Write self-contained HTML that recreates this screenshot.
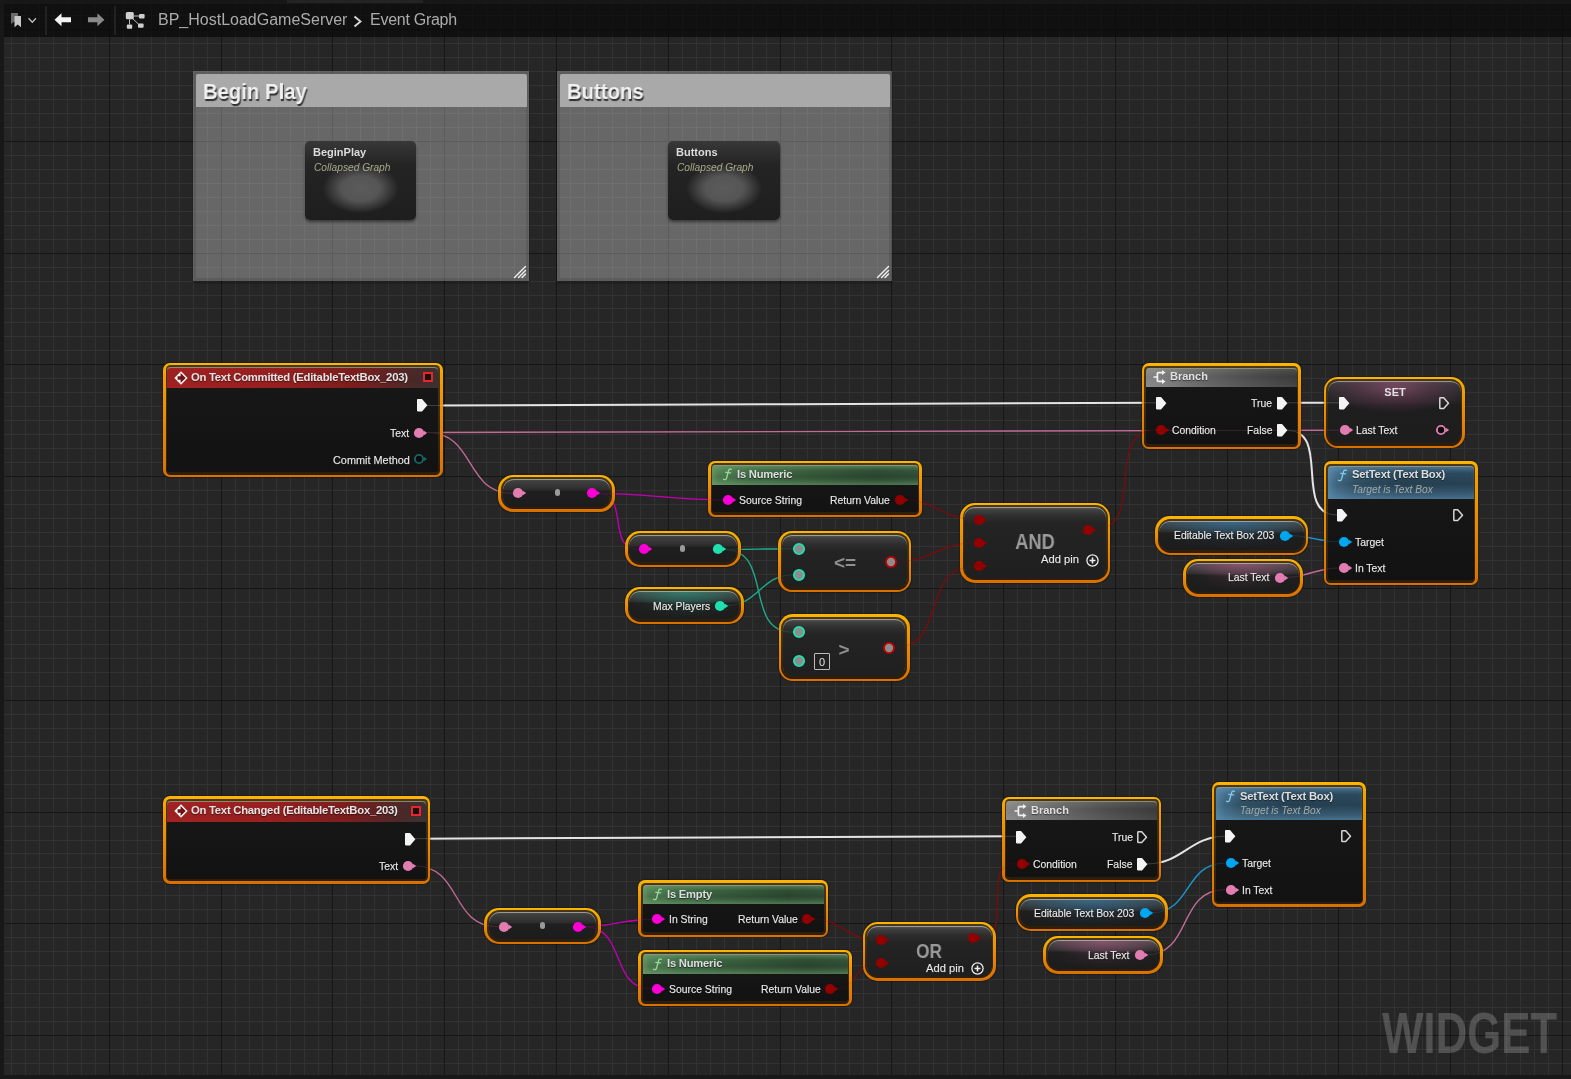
<!DOCTYPE html><html><head><meta charset="utf-8"><style>
*{box-sizing:border-box;margin:0;padding:0}
html,body{width:1571px;height:1079px;overflow:hidden;background:#262626;font-family:"Liberation Sans", sans-serif;}
.t{will-change:transform}
.abs{position:absolute}
.t{position:absolute;white-space:nowrap;line-height:1;color:#e6e6e6}
.node{position:absolute;border:3px solid transparent;border-radius:7px;
  background:linear-gradient(#161616,#111111) padding-box, linear-gradient(#f6b400,#f28a00 70%,#ee7500) border-box;}
.comment{position:absolute;background:rgba(255,255,255,0.30);box-shadow:0 1px 2px rgba(0,0,0,.5)}
</style></head><body><svg width="1571" height="1079" style="position:absolute;left:0;top:0" shape-rendering="crispEdges"><path d="M11 0h1v1079h-1zM25 0h1v1079h-1zM39 0h1v1079h-1zM53 0h1v1079h-1zM67 0h1v1079h-1zM81 0h1v1079h-1zM95 0h1v1079h-1zM123 0h1v1079h-1zM137 0h1v1079h-1zM151 0h1v1079h-1zM165 0h1v1079h-1zM179 0h1v1079h-1zM193 0h1v1079h-1zM207 0h1v1079h-1zM235 0h1v1079h-1zM249 0h1v1079h-1zM262 0h1v1079h-1zM276 0h1v1079h-1zM290 0h1v1079h-1zM304 0h1v1079h-1zM318 0h1v1079h-1zM346 0h1v1079h-1zM360 0h1v1079h-1zM374 0h1v1079h-1zM388 0h1v1079h-1zM402 0h1v1079h-1zM416 0h1v1079h-1zM430 0h1v1079h-1zM458 0h1v1079h-1zM472 0h1v1079h-1zM486 0h1v1079h-1zM500 0h1v1079h-1zM514 0h1v1079h-1zM528 0h1v1079h-1zM542 0h1v1079h-1zM570 0h1v1079h-1zM584 0h1v1079h-1zM598 0h1v1079h-1zM612 0h1v1079h-1zM626 0h1v1079h-1zM640 0h1v1079h-1zM654 0h1v1079h-1zM682 0h1v1079h-1zM696 0h1v1079h-1zM710 0h1v1079h-1zM724 0h1v1079h-1zM738 0h1v1079h-1zM752 0h1v1079h-1zM766 0h1v1079h-1zM794 0h1v1079h-1zM807 0h1v1079h-1zM821 0h1v1079h-1zM835 0h1v1079h-1zM849 0h1v1079h-1zM863 0h1v1079h-1zM877 0h1v1079h-1zM905 0h1v1079h-1zM919 0h1v1079h-1zM933 0h1v1079h-1zM947 0h1v1079h-1zM961 0h1v1079h-1zM975 0h1v1079h-1zM989 0h1v1079h-1zM1017 0h1v1079h-1zM1031 0h1v1079h-1zM1045 0h1v1079h-1zM1059 0h1v1079h-1zM1073 0h1v1079h-1zM1087 0h1v1079h-1zM1101 0h1v1079h-1zM1129 0h1v1079h-1zM1143 0h1v1079h-1zM1157 0h1v1079h-1zM1171 0h1v1079h-1zM1185 0h1v1079h-1zM1199 0h1v1079h-1zM1213 0h1v1079h-1zM1241 0h1v1079h-1zM1255 0h1v1079h-1zM1269 0h1v1079h-1zM1283 0h1v1079h-1zM1297 0h1v1079h-1zM1311 0h1v1079h-1zM1325 0h1v1079h-1zM1352 0h1v1079h-1zM1366 0h1v1079h-1zM1380 0h1v1079h-1zM1394 0h1v1079h-1zM1408 0h1v1079h-1zM1422 0h1v1079h-1zM1436 0h1v1079h-1zM1464 0h1v1079h-1zM1478 0h1v1079h-1zM1492 0h1v1079h-1zM1506 0h1v1079h-1zM1520 0h1v1079h-1zM1534 0h1v1079h-1zM1548 0h1v1079h-1zM0 1h1571v1h-1571zM0 15h1571v1h-1571zM0 43h1571v1h-1571zM0 57h1571v1h-1571zM0 71h1571v1h-1571zM0 85h1571v1h-1571zM0 99h1571v1h-1571zM0 113h1571v1h-1571zM0 127h1571v1h-1571zM0 155h1571v1h-1571zM0 169h1571v1h-1571zM0 183h1571v1h-1571zM0 197h1571v1h-1571zM0 211h1571v1h-1571zM0 225h1571v1h-1571zM0 239h1571v1h-1571zM0 267h1571v1h-1571zM0 281h1571v1h-1571zM0 295h1571v1h-1571zM0 308h1571v1h-1571zM0 322h1571v1h-1571zM0 336h1571v1h-1571zM0 350h1571v1h-1571zM0 378h1571v1h-1571zM0 392h1571v1h-1571zM0 406h1571v1h-1571zM0 420h1571v1h-1571zM0 434h1571v1h-1571zM0 448h1571v1h-1571zM0 462h1571v1h-1571zM0 490h1571v1h-1571zM0 504h1571v1h-1571zM0 518h1571v1h-1571zM0 532h1571v1h-1571zM0 546h1571v1h-1571zM0 560h1571v1h-1571zM0 574h1571v1h-1571zM0 602h1571v1h-1571zM0 616h1571v1h-1571zM0 630h1571v1h-1571zM0 644h1571v1h-1571zM0 658h1571v1h-1571zM0 672h1571v1h-1571zM0 686h1571v1h-1571zM0 714h1571v1h-1571zM0 728h1571v1h-1571zM0 742h1571v1h-1571zM0 756h1571v1h-1571zM0 770h1571v1h-1571zM0 784h1571v1h-1571zM0 798h1571v1h-1571zM0 826h1571v1h-1571zM0 840h1571v1h-1571zM0 853h1571v1h-1571zM0 867h1571v1h-1571zM0 881h1571v1h-1571zM0 895h1571v1h-1571zM0 909h1571v1h-1571zM0 937h1571v1h-1571zM0 951h1571v1h-1571zM0 965h1571v1h-1571zM0 979h1571v1h-1571zM0 993h1571v1h-1571zM0 1007h1571v1h-1571zM0 1021h1571v1h-1571zM0 1049h1571v1h-1571zM0 1063h1571v1h-1571zM0 1077h1571v1h-1571z" fill="#323232"/><path d="M109 0h1v1079h-1zM221 0h1v1079h-1zM332 0h1v1079h-1zM444 0h1v1079h-1zM556 0h1v1079h-1zM668 0h1v1079h-1zM780 0h1v1079h-1zM891 0h1v1079h-1zM1003 0h1v1079h-1zM1115 0h1v1079h-1zM1227 0h1v1079h-1zM1338 0h1v1079h-1zM1450 0h1v1079h-1zM1562 0h1v1079h-1zM0 29h1571v1h-1571zM0 141h1571v1h-1571zM0 253h1571v1h-1571zM0 364h1571v1h-1571zM0 476h1571v1h-1571zM0 588h1571v1h-1571zM0 700h1571v1h-1571zM0 812h1571v1h-1571zM0 923h1571v1h-1571zM0 1035h1571v1h-1571z" fill="#161616"/></svg><div class="comment" style="left:193px;top:71px;width:336px;height:210px;box-shadow:inset 0 0 0 3px rgba(0,0,0,0.10),0 2px 2px rgba(0,0,0,.35)"></div><div class="abs" style="left:196.0px;top:74.0px;width:330.5px;height:32.5px;background:#a9a9a9;border-radius:2px 2px 0 0"></div><div class="t" style="left:203.2px;top:81.1px;font-size:21.6px;color:#f0f0f0;font-weight:bold;font-style:normal;text-shadow:1px 1.5px 1px rgba(0,0,0,.75);transform:scaleX(0.94);transform-origin:0 0">Begin Play</div><div class="abs" style="left:305px;top:141px;width:111px;height:79px;border-radius:5px;background:radial-gradient(ellipse 38px 25px at 50% 60%, #5b5b5b 0%, #555 50%, rgba(40,40,40,0) 100%), linear-gradient(#383838,#242424 30%,#1e1e1e);box-shadow:0 2px 3px rgba(0,0,0,.45)"></div><div class="t" style="left:313.0px;top:147.1px;font-size:11px;color:#dcdcdc;font-weight:bold;font-style:normal;">BeginPlay</div><div class="t" style="left:314.0px;top:162.7px;font-size:10.2px;color:#a9a98a;font-weight:normal;font-style:italic;">Collapsed Graph</div><svg class="abs" style="left:512.5px;top:264.5px" width="14" height="14"><path d="M1.5 12.5L12.5 1.5M5.5 12.5L12.5 5.5M9 12.5L12.5 9" stroke="#f2f2f2" stroke-width="1.4" stroke-linecap="round"/></svg><div class="comment" style="left:557px;top:71px;width:335px;height:210px;box-shadow:inset 0 0 0 3px rgba(0,0,0,0.10),0 2px 2px rgba(0,0,0,.35)"></div><div class="abs" style="left:560.0px;top:74.0px;width:329.5px;height:32.5px;background:#a9a9a9;border-radius:2px 2px 0 0"></div><div class="t" style="left:567.2px;top:81.1px;font-size:21.6px;color:#f0f0f0;font-weight:bold;font-style:normal;text-shadow:1px 1.5px 1px rgba(0,0,0,.75);transform:scaleX(0.94);transform-origin:0 0">Buttons</div><div class="abs" style="left:668px;top:141px;width:112px;height:79px;border-radius:5px;background:radial-gradient(ellipse 38px 25px at 50% 60%, #5b5b5b 0%, #555 50%, rgba(40,40,40,0) 100%), linear-gradient(#383838,#242424 30%,#1e1e1e);box-shadow:0 2px 3px rgba(0,0,0,.45)"></div><div class="t" style="left:676.0px;top:147.1px;font-size:11px;color:#dcdcdc;font-weight:bold;font-style:normal;">Buttons</div><div class="t" style="left:677.0px;top:162.7px;font-size:10.2px;color:#a9a98a;font-weight:normal;font-style:italic;">Collapsed Graph</div><svg class="abs" style="left:875.5px;top:264.5px" width="14" height="14"><path d="M1.5 12.5L12.5 1.5M5.5 12.5L12.5 5.5M9 12.5L12.5 9" stroke="#f2f2f2" stroke-width="1.4" stroke-linecap="round"/></svg><svg width="1571" height="1079" class="abs" style="left:0;top:0"><path d="M427.0 405.5C670.9 405.5 912.1 402.8 1156.0 402.8" fill="none" stroke="#e4e4e4" stroke-width="2.0"/><path d="M427.0 432.5C731.8 432.5 1034.2 430.2 1339.0 430.2" fill="none" stroke="#c06a94" stroke-width="1.35"/><path d="M427.0 432.5C476.0 432.5 464.0 493.4 513.0 493.4" fill="none" stroke="#c06a94" stroke-width="1.35"/><path d="M1287.0 402.8C1304.3 402.8 1321.7 402.8 1339.0 402.8" fill="none" stroke="#e4e4e4" stroke-width="2.0"/><path d="M1287.0 430.2C1331.9 430.2 1292.1 515.0 1337.0 515.0" fill="none" stroke="#e4e4e4" stroke-width="2.0"/><path d="M598.0 493.4C641.5 493.4 678.5 500.0 722.0 500.0" fill="none" stroke="#c000b0" stroke-width="1.35"/><path d="M598.0 493.4C630.0 493.4 606.0 549.4 638.0 549.4" fill="none" stroke="#c000b0" stroke-width="1.35"/><path d="M905.0 500.0C934.5 500.0 944.5 519.5 974.0 519.5" fill="none" stroke="#7a0c0c" stroke-width="1.3"/><path d="M724.0 549.4C747.2 549.4 769.8 548.7 793.0 548.7" fill="none" stroke="#1eaa8a" stroke-width="1.35"/><path d="M724.0 549.4C774.6 549.4 742.4 632.3 793.0 632.3" fill="none" stroke="#1eaa8a" stroke-width="1.35"/><path d="M726.0 605.7C758.6 605.7 760.4 574.9 793.0 574.9" fill="none" stroke="#1eaa8a" stroke-width="1.35"/><path d="M896.0 561.8C928.3 561.8 941.7 542.8 974.0 542.8" fill="none" stroke="#7a0c0c" stroke-width="1.3"/><path d="M894.0 647.7C947.8 647.7 920.2 566.3 974.0 566.3" fill="none" stroke="#7a0c0c" stroke-width="1.3"/><path d="M1094.0 529.5C1147.8 529.5 1102.2 430.2 1156.0 430.2" fill="none" stroke="#7a0c0c" stroke-width="1.3"/><path d="M1290.0 535.5C1308.1 535.5 1319.9 541.8 1338.0 541.8" fill="none" stroke="#1a96d0" stroke-width="1.35"/><path d="M1285.0 577.5C1305.8 577.5 1317.2 568.0 1338.0 568.0" fill="none" stroke="#c06a94" stroke-width="1.35"/><path d="M415.0 838.7C616.1 838.7 814.9 836.3 1016.0 836.3" fill="none" stroke="#e4e4e4" stroke-width="2.0"/><path d="M414.0 865.8C462.3 865.8 449.7 926.7 498.0 926.7" fill="none" stroke="#c06a94" stroke-width="1.35"/><path d="M584.0 926.7C609.2 926.7 626.8 919.2 652.0 919.2" fill="none" stroke="#c000b0" stroke-width="1.35"/><path d="M584.0 926.7C627.4 926.7 608.6 989.0 652.0 989.0" fill="none" stroke="#c000b0" stroke-width="1.35"/><path d="M813.0 919.2C841.0 919.2 848.0 940.1 876.0 940.1" fill="none" stroke="#7a0c0c" stroke-width="1.3"/><path d="M836.0 989.0C857.9 989.0 854.1 963.2 876.0 963.2" fill="none" stroke="#7a0c0c" stroke-width="1.3"/><path d="M979.0 938.0C1016.3 938.0 978.7 863.1 1016.0 863.1" fill="none" stroke="#7a0c0c" stroke-width="1.3"/><path d="M1147.0 863.9C1182.2 863.9 1189.8 836.3 1225.0 836.3" fill="none" stroke="#e4e4e4" stroke-width="2.0"/><path d="M1151.0 912.8C1192.2 912.8 1183.8 863.1 1225.0 863.1" fill="none" stroke="#1a96d0" stroke-width="1.35"/><path d="M1145.0 955.0C1193.4 955.0 1176.6 889.7 1225.0 889.7" fill="none" stroke="#c06a94" stroke-width="1.35"/></svg><div class="abs" style="left:163.0px;top:362.5px;width:279.6px;height:114.5px;border-radius:7px;background:linear-gradient(#ffb600 0px,#f3a000 12px,#ea8400 60%,#d87000 100%);box-shadow:0 0 1px 1px rgba(0,0,0,.25);"><div class="abs" style="left:2.8px;top:2.5px;right:2.8px;bottom:2.3px;border-radius:4.4px;background:linear-gradient(#463818,#2c1e0a)"></div><div class="abs" style="left:4.2px;top:4.5px;right:4.2px;bottom:5px;border-radius:2.8px;background:linear-gradient(#181818,#121212);box-shadow:inset 0 1px 0 rgba(215,215,200,.55);"></div></div><div class="abs" style="left:167.2px;top:367.0px;width:271.2px;height:21.0px;border-radius:4px 4px 0 0;background:linear-gradient(to bottom, rgba(0,0,0,0) 0%, rgba(0,0,0,.05) 60%, rgba(0,0,0,.0) 100%), linear-gradient(to right,#a42222 0%,#9a2020 40%,#7c1e1e 70%,#4a2a2a 92%,#3a3333 100%);box-shadow:inset 0 1px 0 rgba(150,150,130,.85);"></div><div class="abs" style="left:1141.5px;top:363.0px;width:159.7px;height:86.0px;border-radius:7px;background:linear-gradient(#ffb600 0px,#f3a000 12px,#ea8400 60%,#d87000 100%);box-shadow:0 0 1px 1px rgba(0,0,0,.25);"><div class="abs" style="left:2.8px;top:2.5px;right:2.8px;bottom:2.3px;border-radius:4.4px;background:linear-gradient(#463818,#2c1e0a)"></div><div class="abs" style="left:4.2px;top:4.5px;right:4.2px;bottom:5px;border-radius:2.8px;background:linear-gradient(#181818,#121212);box-shadow:inset 0 1px 0 rgba(215,215,200,.55);"></div></div><div class="abs" style="left:1145.7px;top:367.5px;width:151.3px;height:19.0px;border-radius:4px 4px 0 0;background:linear-gradient(to bottom, rgba(255,255,255,.10), rgba(0,0,0,0) 45%, rgba(255,255,255,.06)), linear-gradient(to right,#858585 0%,#686868 30%,#4e4e4e 65%,#3a3a3a 100%);box-shadow:inset 0 1px 0 rgba(150,150,130,.85);"></div><div class="abs" style="left:1323.6px;top:376.8px;width:141.4px;height:71.7px;border-radius:14px;background:linear-gradient(#ffb600 0px,#f3a000 12px,#ea8400 60%,#d87000 100%);box-shadow:0 0 1px 1px rgba(0,0,0,.25);"><div class="abs" style="left:2.8px;top:2.5px;right:2.8px;bottom:2.3px;border-radius:11.4px;background:linear-gradient(#463818,#2c1e0a)"></div><div class="abs" style="left:4.2px;top:4.5px;right:4.2px;bottom:5px;border-radius:9.8px;background:linear-gradient(to right, rgba(0,0,0,0) 5%, rgba(200,100,160,.0) 8%, rgba(0,0,0,0) 100%), radial-gradient(ellipse 55% 26px at 50% 6px, rgba(200,100,155,.42) 0%, rgba(150,70,115,.25) 55%, rgba(0,0,0,0) 100%), linear-gradient(to bottom,#4a4a4a 0px,#353535 3px,#2a2a2a 12px,#232323 22px,#1e1e1e 24px,#1d1d1d 100%);box-shadow:inset 0 1px 0 rgba(215,215,200,.55);"></div></div><div class="abs" style="left:1323.6px;top:461.0px;width:154.7px;height:124.3px;border-radius:7px;background:linear-gradient(#ffb600 0px,#f3a000 12px,#ea8400 60%,#d87000 100%);box-shadow:0 0 1px 1px rgba(0,0,0,.25);"><div class="abs" style="left:2.8px;top:2.5px;right:2.8px;bottom:2.3px;border-radius:4.4px;background:linear-gradient(#463818,#2c1e0a)"></div><div class="abs" style="left:4.2px;top:4.5px;right:4.2px;bottom:5px;border-radius:2.8px;background:linear-gradient(#181818,#121212);box-shadow:inset 0 1px 0 rgba(215,215,200,.55);"></div></div><div class="abs" style="left:1327.8px;top:465.5px;width:146.3px;height:33.0px;border-radius:4px 4px 0 0;background:linear-gradient(to bottom, rgba(110,160,195,.45) 0%, rgba(0,0,0,0) 22%, rgba(0,0,0,.12) 55%, rgba(90,140,175,.45) 100%), linear-gradient(to right,#4f7e9e 0%,#36596f 18%,#2a475a 50%,#2c4a5e 100%);box-shadow:inset 0 1px 0 rgba(150,150,130,.85), inset 3px 0 6px rgba(90,140,175,.6);"></div><div class="abs" style="left:1155.0px;top:516.3px;width:153.3px;height:38.5px;border-radius:15px;background:linear-gradient(#ffb600 0px,#f3a000 12px,#ea8400 60%,#d87000 100%);box-shadow:0 0 1px 1px rgba(0,0,0,.25);"><div class="abs" style="left:2.8px;top:2.5px;right:2.8px;bottom:2.3px;border-radius:12.4px;background:linear-gradient(#463818,#2c1e0a)"></div><div class="abs" style="left:4.2px;top:4.5px;right:4.2px;bottom:5px;border-radius:10.8px;background:radial-gradient(ellipse 62% 13px at 50% 2px, rgba(50,150,215,.42) 0%, rgba(50,150,215,.22) 55%, rgba(0,0,0,0) 100%), radial-gradient(ellipse 45% 14px at 50% 14px, rgba(50,150,215,.10) 0%, rgba(0,0,0,0) 100%), linear-gradient(to bottom,#555 0px,#404040 2px,#333 8px,#2c2c2c 11px,#1f1f1f 12px,#1c1c1c 100%);box-shadow:inset 0 1px 0 rgba(215,215,200,.55);"></div></div><div class="abs" style="left:1183.1px;top:558.7px;width:120.2px;height:37.9px;border-radius:15px;background:linear-gradient(#ffb600 0px,#f3a000 12px,#ea8400 60%,#d87000 100%);box-shadow:0 0 1px 1px rgba(0,0,0,.25);"><div class="abs" style="left:2.8px;top:2.5px;right:2.8px;bottom:2.3px;border-radius:12.4px;background:linear-gradient(#463818,#2c1e0a)"></div><div class="abs" style="left:4.2px;top:4.5px;right:4.2px;bottom:5px;border-radius:10.8px;background:radial-gradient(ellipse 62% 13px at 50% 2px, rgba(215,110,165,.42) 0%, rgba(215,110,165,.22) 55%, rgba(0,0,0,0) 100%), radial-gradient(ellipse 45% 14px at 50% 14px, rgba(215,110,165,.10) 0%, rgba(0,0,0,0) 100%), linear-gradient(to bottom,#555 0px,#404040 2px,#333 8px,#2c2c2c 11px,#1f1f1f 12px,#1c1c1c 100%);box-shadow:inset 0 1px 0 rgba(215,215,200,.55);"></div></div><div class="abs" style="left:498.4px;top:474.6px;width:116.2px;height:37.0px;border-radius:15px;background:linear-gradient(#ffb600 0px,#f3a000 12px,#ea8400 60%,#d87000 100%);box-shadow:0 0 1px 1px rgba(0,0,0,.25);"><div class="abs" style="left:2.8px;top:2.5px;right:2.8px;bottom:2.3px;border-radius:12.4px;background:linear-gradient(#463818,#2c1e0a)"></div><div class="abs" style="left:4.2px;top:4.5px;right:4.2px;bottom:5px;border-radius:10.8px;background:linear-gradient(to bottom,#555 0px,#404040 2px,#333 8px,#2c2c2c 11px,#1f1f1f 12px,#1c1c1c 100%);box-shadow:inset 0 1px 0 rgba(215,215,200,.55);"></div></div><div class="abs" style="left:708.0px;top:460.5px;width:214.0px;height:56.7px;border-radius:7px;background:linear-gradient(#ffb600 0px,#f3a000 12px,#ea8400 60%,#d87000 100%);box-shadow:0 0 1px 1px rgba(0,0,0,.25);"><div class="abs" style="left:2.8px;top:2.5px;right:2.8px;bottom:2.3px;border-radius:4.4px;background:linear-gradient(#463818,#2c1e0a)"></div><div class="abs" style="left:4.2px;top:4.5px;right:4.2px;bottom:5px;border-radius:2.8px;background:linear-gradient(#181818,#121212);box-shadow:inset 0 1px 0 rgba(215,215,200,.55);"></div></div><div class="abs" style="left:712.2px;top:465.0px;width:205.6px;height:19.5px;border-radius:4px 4px 0 0;background:linear-gradient(to bottom, rgba(120,170,120,.45) 0%, rgba(0,0,0,0) 30%, rgba(0,0,0,.12) 60%, rgba(110,160,110,.35) 100%), linear-gradient(to right,#5a8a5b 0%,#43704a 18%,#385c3c 50%,#2f4d33 80%,#34543a 100%);box-shadow:inset 0 1px 0 rgba(150,150,130,.85), inset 3px 0 5px rgba(110,160,110,.5);"></div><div class="abs" style="left:625.0px;top:530.6px;width:115.8px;height:36.4px;border-radius:15px;background:linear-gradient(#ffb600 0px,#f3a000 12px,#ea8400 60%,#d87000 100%);box-shadow:0 0 1px 1px rgba(0,0,0,.25);"><div class="abs" style="left:2.8px;top:2.5px;right:2.8px;bottom:2.3px;border-radius:12.4px;background:linear-gradient(#463818,#2c1e0a)"></div><div class="abs" style="left:4.2px;top:4.5px;right:4.2px;bottom:5px;border-radius:10.8px;background:linear-gradient(to bottom,#555 0px,#404040 2px,#333 8px,#2c2c2c 11px,#1f1f1f 12px,#1c1c1c 100%);box-shadow:inset 0 1px 0 rgba(215,215,200,.55);"></div></div><div class="abs" style="left:625.0px;top:586.6px;width:118.5px;height:37.3px;border-radius:15px;background:linear-gradient(#ffb600 0px,#f3a000 12px,#ea8400 60%,#d87000 100%);box-shadow:0 0 1px 1px rgba(0,0,0,.25);"><div class="abs" style="left:2.8px;top:2.5px;right:2.8px;bottom:2.3px;border-radius:12.4px;background:linear-gradient(#463818,#2c1e0a)"></div><div class="abs" style="left:4.2px;top:4.5px;right:4.2px;bottom:5px;border-radius:10.8px;background:radial-gradient(ellipse 62% 13px at 50% 2px, rgba(40,190,160,.42) 0%, rgba(40,190,160,.22) 55%, rgba(0,0,0,0) 100%), radial-gradient(ellipse 45% 14px at 50% 14px, rgba(40,190,160,.10) 0%, rgba(0,0,0,0) 100%), linear-gradient(to bottom,#555 0px,#404040 2px,#333 8px,#2c2c2c 11px,#1f1f1f 12px,#1c1c1c 100%);box-shadow:inset 0 1px 0 rgba(215,215,200,.55);"></div></div><div class="abs" style="left:778.3px;top:530.5px;width:133.0px;height:61.8px;border-radius:14px;background:linear-gradient(#ffb600 0px,#f3a000 12px,#ea8400 60%,#d87000 100%);box-shadow:0 0 1px 1px rgba(0,0,0,.25);"><div class="abs" style="left:2.8px;top:2.5px;right:2.8px;bottom:2.3px;border-radius:11.4px;background:linear-gradient(#463818,#2c1e0a)"></div><div class="abs" style="left:4.2px;top:4.5px;right:4.2px;bottom:5px;border-radius:9.8px;background:linear-gradient(to bottom,#5c5c5c 0px,#404040 3px,#2e2e2e 9px,#242424 16px,#1f1f1f 100%);box-shadow:inset 0 1px 0 rgba(215,215,200,.55);"></div></div><div class="abs" style="left:778.5px;top:614.2px;width:131.0px;height:67.0px;border-radius:14px;background:linear-gradient(#ffb600 0px,#f3a000 12px,#ea8400 60%,#d87000 100%);box-shadow:0 0 1px 1px rgba(0,0,0,.25);"><div class="abs" style="left:2.8px;top:2.5px;right:2.8px;bottom:2.3px;border-radius:11.4px;background:linear-gradient(#463818,#2c1e0a)"></div><div class="abs" style="left:4.2px;top:4.5px;right:4.2px;bottom:5px;border-radius:9.8px;background:linear-gradient(to bottom,#5c5c5c 0px,#404040 3px,#2e2e2e 9px,#242424 16px,#1f1f1f 100%);box-shadow:inset 0 1px 0 rgba(215,215,200,.55);"></div></div><div class="abs" style="left:960.0px;top:502.5px;width:150.3px;height:80.0px;border-radius:15px;background:linear-gradient(#ffb600 0px,#f3a000 12px,#ea8400 60%,#d87000 100%);box-shadow:0 0 1px 1px rgba(0,0,0,.25);"><div class="abs" style="left:2.8px;top:2.5px;right:2.8px;bottom:2.3px;border-radius:12.4px;background:linear-gradient(#463818,#2c1e0a)"></div><div class="abs" style="left:4.2px;top:4.5px;right:4.2px;bottom:5px;border-radius:10.8px;background:linear-gradient(to bottom,#5c5c5c 0px,#404040 3px,#2e2e2e 9px,#242424 16px,#1f1f1f 100%);box-shadow:inset 0 1px 0 rgba(215,215,200,.55);"></div></div><div class="abs" style="left:163.0px;top:796.1px;width:267.3px;height:87.5px;border-radius:7px;background:linear-gradient(#ffb600 0px,#f3a000 12px,#ea8400 60%,#d87000 100%);box-shadow:0 0 1px 1px rgba(0,0,0,.25);"><div class="abs" style="left:2.8px;top:2.5px;right:2.8px;bottom:2.3px;border-radius:4.4px;background:linear-gradient(#463818,#2c1e0a)"></div><div class="abs" style="left:4.2px;top:4.5px;right:4.2px;bottom:5px;border-radius:2.8px;background:linear-gradient(#181818,#121212);box-shadow:inset 0 1px 0 rgba(215,215,200,.55);"></div></div><div class="abs" style="left:167.2px;top:800.6px;width:258.9px;height:21.0px;border-radius:4px 4px 0 0;background:linear-gradient(to bottom, rgba(0,0,0,0) 0%, rgba(0,0,0,.05) 60%, rgba(0,0,0,.0) 100%), linear-gradient(to right,#a42222 0%,#9a2020 40%,#7c1e1e 70%,#4a2a2a 92%,#3a3333 100%);box-shadow:inset 0 1px 0 rgba(150,150,130,.85);"></div><div class="abs" style="left:1002.0px;top:796.8px;width:159.3px;height:85.4px;border-radius:7px;background:linear-gradient(#ffb600 0px,#f3a000 12px,#ea8400 60%,#d87000 100%);box-shadow:0 0 1px 1px rgba(0,0,0,.25);"><div class="abs" style="left:2.8px;top:2.5px;right:2.8px;bottom:2.3px;border-radius:4.4px;background:linear-gradient(#463818,#2c1e0a)"></div><div class="abs" style="left:4.2px;top:4.5px;right:4.2px;bottom:5px;border-radius:2.8px;background:linear-gradient(#181818,#121212);box-shadow:inset 0 1px 0 rgba(215,215,200,.55);"></div></div><div class="abs" style="left:1006.2px;top:801.3px;width:150.9px;height:19.0px;border-radius:4px 4px 0 0;background:linear-gradient(to bottom, rgba(255,255,255,.10), rgba(0,0,0,0) 45%, rgba(255,255,255,.06)), linear-gradient(to right,#858585 0%,#686868 30%,#4e4e4e 65%,#3a3a3a 100%);box-shadow:inset 0 1px 0 rgba(150,150,130,.85);"></div><div class="abs" style="left:1211.7px;top:782.4px;width:154.4px;height:124.2px;border-radius:7px;background:linear-gradient(#ffb600 0px,#f3a000 12px,#ea8400 60%,#d87000 100%);box-shadow:0 0 1px 1px rgba(0,0,0,.25);"><div class="abs" style="left:2.8px;top:2.5px;right:2.8px;bottom:2.3px;border-radius:4.4px;background:linear-gradient(#463818,#2c1e0a)"></div><div class="abs" style="left:4.2px;top:4.5px;right:4.2px;bottom:5px;border-radius:2.8px;background:linear-gradient(#181818,#121212);box-shadow:inset 0 1px 0 rgba(215,215,200,.55);"></div></div><div class="abs" style="left:1215.9px;top:786.9px;width:146.0px;height:33.5px;border-radius:4px 4px 0 0;background:linear-gradient(to bottom, rgba(110,160,195,.45) 0%, rgba(0,0,0,0) 22%, rgba(0,0,0,.12) 55%, rgba(90,140,175,.45) 100%), linear-gradient(to right,#4f7e9e 0%,#36596f 18%,#2a475a 50%,#2c4a5e 100%);box-shadow:inset 0 1px 0 rgba(150,150,130,.85), inset 3px 0 6px rgba(90,140,175,.6);"></div><div class="abs" style="left:1015.6px;top:894.2px;width:152.7px;height:37.2px;border-radius:15px;background:linear-gradient(#ffb600 0px,#f3a000 12px,#ea8400 60%,#d87000 100%);box-shadow:0 0 1px 1px rgba(0,0,0,.25);"><div class="abs" style="left:2.8px;top:2.5px;right:2.8px;bottom:2.3px;border-radius:12.4px;background:linear-gradient(#463818,#2c1e0a)"></div><div class="abs" style="left:4.2px;top:4.5px;right:4.2px;bottom:5px;border-radius:10.8px;background:radial-gradient(ellipse 62% 13px at 50% 2px, rgba(50,150,215,.42) 0%, rgba(50,150,215,.22) 55%, rgba(0,0,0,0) 100%), radial-gradient(ellipse 45% 14px at 50% 14px, rgba(50,150,215,.10) 0%, rgba(0,0,0,0) 100%), linear-gradient(to bottom,#555 0px,#404040 2px,#333 8px,#2c2c2c 11px,#1f1f1f 12px,#1c1c1c 100%);box-shadow:inset 0 1px 0 rgba(215,215,200,.55);"></div></div><div class="abs" style="left:1043.4px;top:935.9px;width:119.6px;height:37.7px;border-radius:15px;background:linear-gradient(#ffb600 0px,#f3a000 12px,#ea8400 60%,#d87000 100%);box-shadow:0 0 1px 1px rgba(0,0,0,.25);"><div class="abs" style="left:2.8px;top:2.5px;right:2.8px;bottom:2.3px;border-radius:12.4px;background:linear-gradient(#463818,#2c1e0a)"></div><div class="abs" style="left:4.2px;top:4.5px;right:4.2px;bottom:5px;border-radius:10.8px;background:radial-gradient(ellipse 62% 13px at 50% 2px, rgba(215,110,165,.42) 0%, rgba(215,110,165,.22) 55%, rgba(0,0,0,0) 100%), radial-gradient(ellipse 45% 14px at 50% 14px, rgba(215,110,165,.10) 0%, rgba(0,0,0,0) 100%), linear-gradient(to bottom,#555 0px,#404040 2px,#333 8px,#2c2c2c 11px,#1f1f1f 12px,#1c1c1c 100%);box-shadow:inset 0 1px 0 rgba(215,215,200,.55);"></div></div><div class="abs" style="left:484.4px;top:907.8px;width:116.2px;height:36.1px;border-radius:15px;background:linear-gradient(#ffb600 0px,#f3a000 12px,#ea8400 60%,#d87000 100%);box-shadow:0 0 1px 1px rgba(0,0,0,.25);"><div class="abs" style="left:2.8px;top:2.5px;right:2.8px;bottom:2.3px;border-radius:12.4px;background:linear-gradient(#463818,#2c1e0a)"></div><div class="abs" style="left:4.2px;top:4.5px;right:4.2px;bottom:5px;border-radius:10.8px;background:linear-gradient(to bottom,#555 0px,#404040 2px,#333 8px,#2c2c2c 11px,#1f1f1f 12px,#1c1c1c 100%);box-shadow:inset 0 1px 0 rgba(215,215,200,.55);"></div></div><div class="abs" style="left:638.4px;top:880.3px;width:190.1px;height:56.5px;border-radius:7px;background:linear-gradient(#ffb600 0px,#f3a000 12px,#ea8400 60%,#d87000 100%);box-shadow:0 0 1px 1px rgba(0,0,0,.25);"><div class="abs" style="left:2.8px;top:2.5px;right:2.8px;bottom:2.3px;border-radius:4.4px;background:linear-gradient(#463818,#2c1e0a)"></div><div class="abs" style="left:4.2px;top:4.5px;right:4.2px;bottom:5px;border-radius:2.8px;background:linear-gradient(#181818,#121212);box-shadow:inset 0 1px 0 rgba(215,215,200,.55);"></div></div><div class="abs" style="left:642.6px;top:884.8px;width:181.7px;height:19.5px;border-radius:4px 4px 0 0;background:linear-gradient(to bottom, rgba(120,170,120,.45) 0%, rgba(0,0,0,0) 30%, rgba(0,0,0,.12) 60%, rgba(110,160,110,.35) 100%), linear-gradient(to right,#5a8a5b 0%,#43704a 18%,#385c3c 50%,#2f4d33 80%,#34543a 100%);box-shadow:inset 0 1px 0 rgba(150,150,130,.85), inset 3px 0 5px rgba(110,160,110,.5);"></div><div class="abs" style="left:638.4px;top:949.8px;width:213.9px;height:56.5px;border-radius:7px;background:linear-gradient(#ffb600 0px,#f3a000 12px,#ea8400 60%,#d87000 100%);box-shadow:0 0 1px 1px rgba(0,0,0,.25);"><div class="abs" style="left:2.8px;top:2.5px;right:2.8px;bottom:2.3px;border-radius:4.4px;background:linear-gradient(#463818,#2c1e0a)"></div><div class="abs" style="left:4.2px;top:4.5px;right:4.2px;bottom:5px;border-radius:2.8px;background:linear-gradient(#181818,#121212);box-shadow:inset 0 1px 0 rgba(215,215,200,.55);"></div></div><div class="abs" style="left:642.6px;top:954.3px;width:205.5px;height:19.5px;border-radius:4px 4px 0 0;background:linear-gradient(to bottom, rgba(120,170,120,.45) 0%, rgba(0,0,0,0) 30%, rgba(0,0,0,.12) 60%, rgba(110,160,110,.35) 100%), linear-gradient(to right,#5a8a5b 0%,#43704a 18%,#385c3c 50%,#2f4d33 80%,#34543a 100%);box-shadow:inset 0 1px 0 rgba(150,150,130,.85), inset 3px 0 5px rgba(110,160,110,.5);"></div><div class="abs" style="left:862.6px;top:921.6px;width:133.4px;height:59.1px;border-radius:15px;background:linear-gradient(#ffb600 0px,#f3a000 12px,#ea8400 60%,#d87000 100%);box-shadow:0 0 1px 1px rgba(0,0,0,.25);"><div class="abs" style="left:2.8px;top:2.5px;right:2.8px;bottom:2.3px;border-radius:12.4px;background:linear-gradient(#463818,#2c1e0a)"></div><div class="abs" style="left:4.2px;top:4.5px;right:4.2px;bottom:5px;border-radius:10.8px;background:linear-gradient(to bottom,#5c5c5c 0px,#404040 3px,#2e2e2e 9px,#242424 16px,#1f1f1f 100%);box-shadow:inset 0 1px 0 rgba(215,215,200,.55);"></div></div><svg width="1571" height="1079" class="abs" style="left:0;top:0;opacity:0.2"><path d="M427.0 405.5C670.9 405.5 912.1 402.8 1156.0 402.8" fill="none" stroke="#e4e4e4" stroke-width="1"/><path d="M427.0 432.5C731.8 432.5 1034.2 430.2 1339.0 430.2" fill="none" stroke="#c06a94" stroke-width="1"/><path d="M427.0 432.5C476.0 432.5 464.0 493.4 513.0 493.4" fill="none" stroke="#c06a94" stroke-width="1"/><path d="M1287.0 402.8C1304.3 402.8 1321.7 402.8 1339.0 402.8" fill="none" stroke="#e4e4e4" stroke-width="1"/><path d="M1287.0 430.2C1331.9 430.2 1292.1 515.0 1337.0 515.0" fill="none" stroke="#e4e4e4" stroke-width="1"/><path d="M598.0 493.4C641.5 493.4 678.5 500.0 722.0 500.0" fill="none" stroke="#c000b0" stroke-width="1"/><path d="M598.0 493.4C630.0 493.4 606.0 549.4 638.0 549.4" fill="none" stroke="#c000b0" stroke-width="1"/><path d="M905.0 500.0C934.5 500.0 944.5 519.5 974.0 519.5" fill="none" stroke="#7a0c0c" stroke-width="1"/><path d="M724.0 549.4C747.2 549.4 769.8 548.7 793.0 548.7" fill="none" stroke="#1eaa8a" stroke-width="1"/><path d="M724.0 549.4C774.6 549.4 742.4 632.3 793.0 632.3" fill="none" stroke="#1eaa8a" stroke-width="1"/><path d="M726.0 605.7C758.6 605.7 760.4 574.9 793.0 574.9" fill="none" stroke="#1eaa8a" stroke-width="1"/><path d="M896.0 561.8C928.3 561.8 941.7 542.8 974.0 542.8" fill="none" stroke="#7a0c0c" stroke-width="1"/><path d="M894.0 647.7C947.8 647.7 920.2 566.3 974.0 566.3" fill="none" stroke="#7a0c0c" stroke-width="1"/><path d="M1094.0 529.5C1147.8 529.5 1102.2 430.2 1156.0 430.2" fill="none" stroke="#7a0c0c" stroke-width="1"/><path d="M1290.0 535.5C1308.1 535.5 1319.9 541.8 1338.0 541.8" fill="none" stroke="#1a96d0" stroke-width="1"/><path d="M1285.0 577.5C1305.8 577.5 1317.2 568.0 1338.0 568.0" fill="none" stroke="#c06a94" stroke-width="1"/><path d="M415.0 838.7C616.1 838.7 814.9 836.3 1016.0 836.3" fill="none" stroke="#e4e4e4" stroke-width="1"/><path d="M414.0 865.8C462.3 865.8 449.7 926.7 498.0 926.7" fill="none" stroke="#c06a94" stroke-width="1"/><path d="M584.0 926.7C609.2 926.7 626.8 919.2 652.0 919.2" fill="none" stroke="#c000b0" stroke-width="1"/><path d="M584.0 926.7C627.4 926.7 608.6 989.0 652.0 989.0" fill="none" stroke="#c000b0" stroke-width="1"/><path d="M813.0 919.2C841.0 919.2 848.0 940.1 876.0 940.1" fill="none" stroke="#7a0c0c" stroke-width="1"/><path d="M836.0 989.0C857.9 989.0 854.1 963.2 876.0 963.2" fill="none" stroke="#7a0c0c" stroke-width="1"/><path d="M979.0 938.0C1016.3 938.0 978.7 863.1 1016.0 863.1" fill="none" stroke="#7a0c0c" stroke-width="1"/><path d="M1147.0 863.9C1182.2 863.9 1189.8 836.3 1225.0 836.3" fill="none" stroke="#e4e4e4" stroke-width="1"/><path d="M1151.0 912.8C1192.2 912.8 1183.8 863.1 1225.0 863.1" fill="none" stroke="#1a96d0" stroke-width="1"/><path d="M1145.0 955.0C1193.4 955.0 1176.6 889.7 1225.0 889.7" fill="none" stroke="#c06a94" stroke-width="1"/></svg><svg class="abs" style="left:174.1px;top:370.8px" width="14" height="14"><path d="M7 0.3L13.7 7L7 13.7L0.3 7Z" fill="#f6f6f6"/><path d="M3.6 5.2H6.6V2.0L11.7 7L6.6 12V8.8H3.6Z" fill="#6e1212"/></svg><div class="t" style="left:191.2px;top:371.8px;font-size:11.3px;color:#e4e4e4;font-weight:bold;font-style:normal;text-shadow:0 1px 1px rgba(0,0,0,.5);letter-spacing:-0.26px">On Text Committed (EditableTextBox_203)</div><div class="abs" style="left:423.0px;top:372.0px;width:10px;height:10px;border:2px solid #e8252a;background:#1a1010"></div><svg class="abs" style="left:415.8px;top:398.3px;overflow:visible" width="13" height="15"><path d="M1.8 1H6L11.4 7.2L6 13.4H1.8Q1 13.4 1 12.6V1.8Q1 1 1.8 1Z" fill="#f4f4f4"/></svg><svg class="abs" style="left:413.0px;top:426.5px;overflow:visible" width="16" height="12"><circle cx="6" cy="6" r="5.1" fill="#e27db2"/><path d="M10.6 3.6L14.2 6L10.6 8.4Z" fill="#e27db2"/></svg><div class="t" style="right:1161.5px;top:428.5px;font-size:10.4px;color:#e8e8e8;font-weight:normal;font-style:normal;text-shadow:0 1px 1px rgba(0,0,0,.6);-webkit-text-stroke:0.25px rgba(240,240,240,.55)">Text</div><svg class="abs" style="left:413.0px;top:453.0px;overflow:visible" width="16" height="12"><circle cx="6" cy="6" r="4.1" fill="#0c0c0c" stroke="#186464" stroke-width="1.9"/><path d="M10.8 3.7L14.2 6L10.8 8.3Z" fill="#186464"/></svg><div class="t" style="right:1161.5px;top:454.6px;font-size:10.9px;color:#e8e8e8;font-weight:normal;font-style:normal;text-shadow:0 1px 1px rgba(0,0,0,.6);-webkit-text-stroke:0.25px rgba(240,240,240,.55)">Commit Method</div><svg class="abs" style="left:1153.0px;top:370.0px" width="14" height="14"><path d="M0.5 7H4.4M4.4 2.6V11.4M4.4 2.6H10M4.4 11.4H10" stroke="#f0f0f0" stroke-width="1.7" fill="none"/><path d="M9 0L12.5 2.5L9 5Z M9 9L12.5 11.5L9 14Z" fill="#f0f0f0"/></svg><div class="t" style="left:1170.0px;top:370.7px;font-size:11px;color:#e0e0e0;font-weight:bold;font-style:normal;text-shadow:0 1px 1px rgba(0,0,0,.5)">Branch</div><svg class="abs" style="left:1154.8px;top:395.8px;overflow:visible" width="13" height="15"><path d="M1.8 1H6L11.4 7.2L6 13.4H1.8Q1 13.4 1 12.6V1.8Q1 1 1.8 1Z" fill="#f4f4f4"/></svg><svg class="abs" style="left:1275.8px;top:395.8px;overflow:visible" width="13" height="15"><path d="M1.8 1H6L11.4 7.2L6 13.4H1.8Q1 13.4 1 12.6V1.8Q1 1 1.8 1Z" fill="#f4f4f4"/></svg><div class="t" style="right:299.0px;top:399.0px;font-size:10.4px;color:#e8e8e8;font-weight:normal;font-style:normal;text-shadow:0 1px 1px rgba(0,0,0,.6);-webkit-text-stroke:0.25px rgba(240,240,240,.55)">True</div><svg class="abs" style="left:1155.0px;top:424.0px;overflow:visible" width="16" height="12"><circle cx="6" cy="6" r="5.1" fill="#930000"/><path d="M10.6 3.6L14.2 6L10.6 8.4Z" fill="#930000"/></svg><div class="t" style="left:1172.2px;top:426.0px;font-size:10.4px;color:#e8e8e8;font-weight:normal;font-style:normal;text-shadow:0 1px 1px rgba(0,0,0,.6);-webkit-text-stroke:0.25px rgba(240,240,240,.55)">Condition</div><svg class="abs" style="left:1275.8px;top:422.8px;overflow:visible" width="13" height="15"><path d="M1.8 1H6L11.4 7.2L6 13.4H1.8Q1 13.4 1 12.6V1.8Q1 1 1.8 1Z" fill="#f4f4f4"/></svg><div class="t" style="right:299.0px;top:426.0px;font-size:10.4px;color:#e8e8e8;font-weight:normal;font-style:normal;text-shadow:0 1px 1px rgba(0,0,0,.6);-webkit-text-stroke:0.25px rgba(240,240,240,.55)">False</div><div class="t" style="left:1394.7px;top:387.4px;font-size:11px;color:#e0e0e0;font-weight:bold;font-style:normal;transform:translateX(-50%);">SET</div><svg class="abs" style="left:1338.3px;top:395.6px;overflow:visible" width="13" height="15"><path d="M1.8 1H6L11.4 7.2L6 13.4H1.8Q1 13.4 1 12.6V1.8Q1 1 1.8 1Z" fill="#f4f4f4"/></svg><svg class="abs" style="left:1437.8px;top:395.6px;overflow:visible" width="13" height="15"><path d="M2.4 1.8H5.7L10.5 7.2L5.7 12.6H2.4Q1.8 12.6 1.8 12V2.4Q1.8 1.8 2.4 1.8Z" fill="none" stroke="#d6d6d6" stroke-width="1.5" stroke-linejoin="round"/></svg><svg class="abs" style="left:1339.0px;top:424.2px;overflow:visible" width="16" height="12"><circle cx="6" cy="6" r="5.1" fill="#e27db2"/><path d="M10.6 3.6L14.2 6L10.6 8.4Z" fill="#e27db2"/></svg><div class="t" style="left:1356.0px;top:426.2px;font-size:10.4px;color:#e8e8e8;font-weight:normal;font-style:normal;text-shadow:0 1px 1px rgba(0,0,0,.6);-webkit-text-stroke:0.25px rgba(240,240,240,.55)">Last Text</div><svg class="abs" style="left:1435.0px;top:424.2px;overflow:visible" width="16" height="12"><circle cx="6" cy="6" r="4.1" fill="#0c0c0c" stroke="#e27db2" stroke-width="1.9"/><path d="M10.8 3.7L14.2 6L10.8 8.3Z" fill="#e27db2"/></svg><svg class="abs" style="left:1337.1px;top:468.8px" width="11" height="13"><path d="M9.4 1.4C8.2 0.6 6.9 1.2 6.5 2.8L4.6 10C4.1 11.6 2.8 12.1 1.5 11.2" fill="none" stroke="#86c8ee" stroke-width="1.3" stroke-linecap="round"/><path d="M3.7 4.4L8.6 4.9" stroke="#86c8ee" stroke-width="1.2" stroke-linecap="round"/></svg><div class="t" style="left:1352.1px;top:469.2px;font-size:11.2px;color:#dedede;font-weight:bold;font-style:normal;text-shadow:0 1px 1px rgba(0,0,0,.5);letter-spacing:-0.2px">SetText (Text Box)</div><div class="t" style="left:1352.1px;top:484.9px;font-size:10.2px;color:#a3aaa8;font-weight:normal;font-style:italic;">Target is Text Box</div><svg class="abs" style="left:1336.3px;top:507.8px;overflow:visible" width="13" height="15"><path d="M1.8 1H6L11.4 7.2L6 13.4H1.8Q1 13.4 1 12.6V1.8Q1 1 1.8 1Z" fill="#f4f4f4"/></svg><svg class="abs" style="left:1452.3px;top:507.8px;overflow:visible" width="13" height="15"><path d="M2.4 1.8H5.7L10.5 7.2L5.7 12.6H2.4Q1.8 12.6 1.8 12V2.4Q1.8 1.8 2.4 1.8Z" fill="none" stroke="#d6d6d6" stroke-width="1.5" stroke-linejoin="round"/></svg><svg class="abs" style="left:1337.5px;top:535.8px;overflow:visible" width="16" height="12"><circle cx="6" cy="6" r="5.1" fill="#00a6f0"/><path d="M10.6 3.6L14.2 6L10.6 8.4Z" fill="#00a6f0"/></svg><div class="t" style="left:1354.7px;top:537.6px;font-size:10.4px;color:#e8e8e8;font-weight:normal;font-style:normal;text-shadow:0 1px 1px rgba(0,0,0,.6);-webkit-text-stroke:0.25px rgba(240,240,240,.55)">Target</div><svg class="abs" style="left:1337.5px;top:562.0px;overflow:visible" width="16" height="12"><circle cx="6" cy="6" r="5.1" fill="#e27db2"/><path d="M10.6 3.6L14.2 6L10.6 8.4Z" fill="#e27db2"/></svg><div class="t" style="left:1354.7px;top:563.8px;font-size:10.4px;color:#e8e8e8;font-weight:normal;font-style:normal;text-shadow:0 1px 1px rgba(0,0,0,.6);-webkit-text-stroke:0.25px rgba(240,240,240,.55)">In Text</div><svg class="abs" style="left:1278.5px;top:529.5px;overflow:visible" width="16" height="12"><circle cx="6" cy="6" r="5.1" fill="#00a6f0"/><path d="M10.6 3.6L14.2 6L10.6 8.4Z" fill="#00a6f0"/></svg><div class="t" style="right:296.7px;top:531.0px;font-size:10.4px;color:#e8e8e8;font-weight:normal;font-style:normal;text-shadow:0 1px 1px rgba(0,0,0,.6);-webkit-text-stroke:0.25px rgba(240,240,240,.55)">Editable Text Box 203</div><svg class="abs" style="left:1273.5px;top:571.5px;overflow:visible" width="16" height="12"><circle cx="6" cy="6" r="5.1" fill="#e27db2"/><path d="M10.6 3.6L14.2 6L10.6 8.4Z" fill="#e27db2"/></svg><div class="t" style="right:302.0px;top:573.0px;font-size:10.4px;color:#e8e8e8;font-weight:normal;font-style:normal;text-shadow:0 1px 1px rgba(0,0,0,.6);-webkit-text-stroke:0.25px rgba(240,240,240,.55)">Last Text</div><svg class="abs" style="left:512.0px;top:487.4px;overflow:visible" width="16" height="12"><circle cx="6" cy="6" r="5.1" fill="#e27db2"/><path d="M10.6 3.6L14.2 6L10.6 8.4Z" fill="#e27db2"/></svg><svg class="abs" style="left:586.2px;top:487.4px;overflow:visible" width="16" height="12"><circle cx="6" cy="6" r="5.1" fill="#fb00d6"/><path d="M10.6 3.6L14.2 6L10.6 8.4Z" fill="#fb00d6"/></svg><div class="abs" style="left:554.5px;top:488.9px;width:5px;height:7px;border-radius:2.5px;background:#9a9a9a"></div><svg class="abs" style="left:721.5px;top:468.3px" width="11" height="13"><path d="M9.4 1.4C8.2 0.6 6.9 1.2 6.5 2.8L4.6 10C4.1 11.6 2.8 12.1 1.5 11.2" fill="none" stroke="#98d898" stroke-width="1.3" stroke-linecap="round"/><path d="M3.7 4.4L8.6 4.9" stroke="#98d898" stroke-width="1.2" stroke-linecap="round"/></svg><div class="t" style="left:736.5px;top:468.7px;font-size:11.2px;color:#dedede;font-weight:bold;font-style:normal;text-shadow:0 1px 1px rgba(0,0,0,.5);letter-spacing:-0.2px">Is Numeric</div><svg class="abs" style="left:721.5px;top:494.0px;overflow:visible" width="16" height="12"><circle cx="6" cy="6" r="5.1" fill="#fb00d6"/><path d="M10.6 3.6L14.2 6L10.6 8.4Z" fill="#fb00d6"/></svg><div class="t" style="left:738.7px;top:495.8px;font-size:10.4px;color:#e8e8e8;font-weight:normal;font-style:normal;text-shadow:0 1px 1px rgba(0,0,0,.6);-webkit-text-stroke:0.25px rgba(240,240,240,.55)">Source String</div><svg class="abs" style="left:893.5px;top:494.0px;overflow:visible" width="16" height="12"><circle cx="6" cy="6" r="5.1" fill="#930000"/><path d="M10.6 3.6L14.2 6L10.6 8.4Z" fill="#930000"/></svg><div class="t" style="right:681.0px;top:495.8px;font-size:10.4px;color:#e8e8e8;font-weight:normal;font-style:normal;text-shadow:0 1px 1px rgba(0,0,0,.6);-webkit-text-stroke:0.25px rgba(240,240,240,.55)">Return Value</div><svg class="abs" style="left:637.5px;top:543.4px;overflow:visible" width="16" height="12"><circle cx="6" cy="6" r="5.1" fill="#fb00d6"/><path d="M10.6 3.6L14.2 6L10.6 8.4Z" fill="#fb00d6"/></svg><svg class="abs" style="left:712.3px;top:543.4px;overflow:visible" width="16" height="12"><circle cx="6" cy="6" r="5.1" fill="#1fe0ae"/><path d="M10.6 3.6L14.2 6L10.6 8.4Z" fill="#1fe0ae"/></svg><div class="abs" style="left:680.2px;top:544.9px;width:5px;height:7px;border-radius:2.5px;background:#9a9a9a"></div><svg class="abs" style="left:714.2px;top:599.7px;overflow:visible" width="16" height="12"><circle cx="6" cy="6" r="5.1" fill="#1fe0ae"/><path d="M10.6 3.6L14.2 6L10.6 8.4Z" fill="#1fe0ae"/></svg><div class="t" style="right:860.6px;top:601.6px;font-size:10.4px;color:#e8e8e8;font-weight:normal;font-style:normal;text-shadow:0 1px 1px rgba(0,0,0,.6);-webkit-text-stroke:0.25px rgba(240,240,240,.55)">Max Players</div><svg class="abs" style="left:791.5px;top:541.7px" width="14" height="14"><circle cx="7" cy="7" r="5.1" fill="#8d8d8d" stroke="#1fe0ae" stroke-width="1.9"/></svg><svg class="abs" style="left:791.5px;top:567.9px" width="14" height="14"><circle cx="7" cy="7" r="5.1" fill="#8d8d8d" stroke="#1fe0ae" stroke-width="1.9"/></svg><svg class="abs" style="left:883.5px;top:554.8px" width="14" height="14"><circle cx="7" cy="7" r="5.1" fill="#8d8d8d" stroke="#c00000" stroke-width="1.9"/></svg><div class="t" style="left:844.5px;top:552.9px;font-size:19px;color:#8f8f8f;font-weight:bold;font-style:normal;transform:translateX(-50%);">&lt;=</div><svg class="abs" style="left:791.7px;top:625.3px" width="14" height="14"><circle cx="7" cy="7" r="5.1" fill="#8d8d8d" stroke="#1fe0ae" stroke-width="1.9"/></svg><svg class="abs" style="left:791.7px;top:654.4px" width="14" height="14"><circle cx="7" cy="7" r="5.1" fill="#8d8d8d" stroke="#1fe0ae" stroke-width="1.9"/></svg><svg class="abs" style="left:881.6px;top:640.7px" width="14" height="14"><circle cx="7" cy="7" r="5.1" fill="#8d8d8d" stroke="#c00000" stroke-width="1.9"/></svg><div class="abs" style="left:813.5px;top:653.0px;width:16.0px;height:17.0px;border:1.5px solid #bdbdbd;border-radius:1px"></div><div class="t" style="left:821.5px;top:656.7px;font-size:11px;color:#e0e0e0;font-weight:normal;font-style:normal;transform:translateX(-50%);">0</div><div class="t" style="left:843.5px;top:639.9px;font-size:19px;color:#8f8f8f;font-weight:bold;font-style:normal;transform:translateX(-50%);">&gt;</div><svg class="abs" style="left:973.2px;top:513.5px;overflow:visible" width="16" height="12"><circle cx="6" cy="6" r="5.1" fill="#930000"/><path d="M10.6 3.6L14.2 6L10.6 8.4Z" fill="#930000"/></svg><svg class="abs" style="left:973.2px;top:536.8px;overflow:visible" width="16" height="12"><circle cx="6" cy="6" r="5.1" fill="#930000"/><path d="M10.6 3.6L14.2 6L10.6 8.4Z" fill="#930000"/></svg><svg class="abs" style="left:973.2px;top:560.3px;overflow:visible" width="16" height="12"><circle cx="6" cy="6" r="5.1" fill="#930000"/><path d="M10.6 3.6L14.2 6L10.6 8.4Z" fill="#930000"/></svg><svg class="abs" style="left:1082.0px;top:523.5px;overflow:visible" width="16" height="12"><circle cx="6" cy="6" r="5.1" fill="#930000"/><path d="M10.6 3.6L14.2 6L10.6 8.4Z" fill="#930000"/></svg><div class="t" style="left:1035.0px;top:532.1px;font-size:21.5px;color:#9a9a9a;font-weight:bold;font-style:normal;transform:translateX(-50%);transform:translateX(-50%) scaleX(0.85)">AND</div><div class="t" style="left:1041.3px;top:553.8px;font-size:11.2px;color:#e8e8e8;font-weight:normal;font-style:normal;text-shadow:0 1px 1px rgba(0,0,0,.6);-webkit-text-stroke:0.25px rgba(240,240,240,.55)">Add pin</div><svg class="abs" style="left:1086px;top:553.5px" width="13" height="13"><circle cx="6.5" cy="6.5" r="5.6" fill="none" stroke="#eee" stroke-width="1.3"/><path d="M6.5 3.5V9.5M3.5 6.5H9.5" stroke="#eee" stroke-width="1.6"/></svg><svg class="abs" style="left:174.1px;top:804.4px" width="14" height="14"><path d="M7 0.3L13.7 7L7 13.7L0.3 7Z" fill="#f6f6f6"/><path d="M3.6 5.2H6.6V2.0L11.7 7L6.6 12V8.8H3.6Z" fill="#6e1212"/></svg><div class="t" style="left:191.2px;top:804.8px;font-size:11.3px;color:#e4e4e4;font-weight:bold;font-style:normal;text-shadow:0 1px 1px rgba(0,0,0,.5);letter-spacing:-0.26px">On Text Changed (EditableTextBox_203)</div><div class="abs" style="left:411.0px;top:805.5px;width:10px;height:10px;border:2px solid #e8252a;background:#1a1010"></div><svg class="abs" style="left:403.8px;top:831.5px;overflow:visible" width="13" height="15"><path d="M1.8 1H6L11.4 7.2L6 13.4H1.8Q1 13.4 1 12.6V1.8Q1 1 1.8 1Z" fill="#f4f4f4"/></svg><svg class="abs" style="left:402.0px;top:859.8px;overflow:visible" width="16" height="12"><circle cx="6" cy="6" r="5.1" fill="#e27db2"/><path d="M10.6 3.6L14.2 6L10.6 8.4Z" fill="#e27db2"/></svg><div class="t" style="right:1172.5px;top:861.8px;font-size:10.4px;color:#e8e8e8;font-weight:normal;font-style:normal;text-shadow:0 1px 1px rgba(0,0,0,.6);-webkit-text-stroke:0.25px rgba(240,240,240,.55)">Text</div><svg class="abs" style="left:1013.5px;top:803.8px" width="14" height="14"><path d="M0.5 7H4.4M4.4 2.6V11.4M4.4 2.6H10M4.4 11.4H10" stroke="#f0f0f0" stroke-width="1.7" fill="none"/><path d="M9 0L12.5 2.5L9 5Z M9 9L12.5 11.5L9 14Z" fill="#f0f0f0"/></svg><div class="t" style="left:1030.5px;top:804.5px;font-size:11px;color:#e0e0e0;font-weight:bold;font-style:normal;text-shadow:0 1px 1px rgba(0,0,0,.5)">Branch</div><svg class="abs" style="left:1015.3px;top:829.6px;overflow:visible" width="13" height="15"><path d="M1.8 1H6L11.4 7.2L6 13.4H1.8Q1 13.4 1 12.6V1.8Q1 1 1.8 1Z" fill="#f4f4f4"/></svg><svg class="abs" style="left:1136.3px;top:829.6px;overflow:visible" width="13" height="15"><path d="M2.4 1.8H5.7L10.5 7.2L5.7 12.6H2.4Q1.8 12.6 1.8 12V2.4Q1.8 1.8 2.4 1.8Z" fill="none" stroke="#d6d6d6" stroke-width="1.5" stroke-linejoin="round"/></svg><div class="t" style="right:438.5px;top:832.8px;font-size:10.4px;color:#e8e8e8;font-weight:normal;font-style:normal;text-shadow:0 1px 1px rgba(0,0,0,.6);-webkit-text-stroke:0.25px rgba(240,240,240,.55)">True</div><svg class="abs" style="left:1015.5px;top:857.8px;overflow:visible" width="16" height="12"><circle cx="6" cy="6" r="5.1" fill="#930000"/><path d="M10.6 3.6L14.2 6L10.6 8.4Z" fill="#930000"/></svg><div class="t" style="left:1032.7px;top:859.8px;font-size:10.4px;color:#e8e8e8;font-weight:normal;font-style:normal;text-shadow:0 1px 1px rgba(0,0,0,.6);-webkit-text-stroke:0.25px rgba(240,240,240,.55)">Condition</div><svg class="abs" style="left:1136.3px;top:856.6px;overflow:visible" width="13" height="15"><path d="M1.8 1H6L11.4 7.2L6 13.4H1.8Q1 13.4 1 12.6V1.8Q1 1 1.8 1Z" fill="#f4f4f4"/></svg><div class="t" style="right:438.5px;top:859.8px;font-size:10.4px;color:#e8e8e8;font-weight:normal;font-style:normal;text-shadow:0 1px 1px rgba(0,0,0,.6);-webkit-text-stroke:0.25px rgba(240,240,240,.55)">False</div><svg class="abs" style="left:1225.2px;top:790.2px" width="11" height="13"><path d="M9.4 1.4C8.2 0.6 6.9 1.2 6.5 2.8L4.6 10C4.1 11.6 2.8 12.1 1.5 11.2" fill="none" stroke="#86c8ee" stroke-width="1.3" stroke-linecap="round"/><path d="M3.7 4.4L8.6 4.9" stroke="#86c8ee" stroke-width="1.2" stroke-linecap="round"/></svg><div class="t" style="left:1240.2px;top:790.6px;font-size:11.2px;color:#dedede;font-weight:bold;font-style:normal;text-shadow:0 1px 1px rgba(0,0,0,.5);letter-spacing:-0.2px">SetText (Text Box)</div><div class="t" style="left:1240.2px;top:806.3px;font-size:10.2px;color:#a3aaa8;font-weight:normal;font-style:italic;">Target is Text Box</div><svg class="abs" style="left:1224.1px;top:829.1px;overflow:visible" width="13" height="15"><path d="M1.8 1H6L11.4 7.2L6 13.4H1.8Q1 13.4 1 12.6V1.8Q1 1 1.8 1Z" fill="#f4f4f4"/></svg><svg class="abs" style="left:1340.1px;top:829.1px;overflow:visible" width="13" height="15"><path d="M2.4 1.8H5.7L10.5 7.2L5.7 12.6H2.4Q1.8 12.6 1.8 12V2.4Q1.8 1.8 2.4 1.8Z" fill="none" stroke="#d6d6d6" stroke-width="1.5" stroke-linejoin="round"/></svg><svg class="abs" style="left:1225.0px;top:857.1px;overflow:visible" width="16" height="12"><circle cx="6" cy="6" r="5.1" fill="#00a6f0"/><path d="M10.6 3.6L14.2 6L10.6 8.4Z" fill="#00a6f0"/></svg><div class="t" style="left:1242.2px;top:858.9px;font-size:10.4px;color:#e8e8e8;font-weight:normal;font-style:normal;text-shadow:0 1px 1px rgba(0,0,0,.6);-webkit-text-stroke:0.25px rgba(240,240,240,.55)">Target</div><svg class="abs" style="left:1225.0px;top:883.7px;overflow:visible" width="16" height="12"><circle cx="6" cy="6" r="5.1" fill="#e27db2"/><path d="M10.6 3.6L14.2 6L10.6 8.4Z" fill="#e27db2"/></svg><div class="t" style="left:1242.2px;top:885.5px;font-size:10.4px;color:#e8e8e8;font-weight:normal;font-style:normal;text-shadow:0 1px 1px rgba(0,0,0,.6);-webkit-text-stroke:0.25px rgba(240,240,240,.55)">In Text</div><svg class="abs" style="left:1139.2px;top:906.8px;overflow:visible" width="16" height="12"><circle cx="6" cy="6" r="5.1" fill="#00a6f0"/><path d="M10.6 3.6L14.2 6L10.6 8.4Z" fill="#00a6f0"/></svg><div class="t" style="right:436.5px;top:909.0px;font-size:10.4px;color:#e8e8e8;font-weight:normal;font-style:normal;text-shadow:0 1px 1px rgba(0,0,0,.6);-webkit-text-stroke:0.25px rgba(240,240,240,.55)">Editable Text Box 203</div><svg class="abs" style="left:1133.7px;top:949.0px;overflow:visible" width="16" height="12"><circle cx="6" cy="6" r="5.1" fill="#e27db2"/><path d="M10.6 3.6L14.2 6L10.6 8.4Z" fill="#e27db2"/></svg><div class="t" style="right:441.5px;top:951.2px;font-size:10.4px;color:#e8e8e8;font-weight:normal;font-style:normal;text-shadow:0 1px 1px rgba(0,0,0,.6);-webkit-text-stroke:0.25px rgba(240,240,240,.55)">Last Text</div><svg class="abs" style="left:497.7px;top:920.7px;overflow:visible" width="16" height="12"><circle cx="6" cy="6" r="5.1" fill="#e27db2"/><path d="M10.6 3.6L14.2 6L10.6 8.4Z" fill="#e27db2"/></svg><svg class="abs" style="left:572.3px;top:920.7px;overflow:visible" width="16" height="12"><circle cx="6" cy="6" r="5.1" fill="#fb00d6"/><path d="M10.6 3.6L14.2 6L10.6 8.4Z" fill="#fb00d6"/></svg><div class="abs" style="left:540.4px;top:922.2px;width:5px;height:7px;border-radius:2.5px;background:#9a9a9a"></div><svg class="abs" style="left:651.9px;top:888.1px" width="11" height="13"><path d="M9.4 1.4C8.2 0.6 6.9 1.2 6.5 2.8L4.6 10C4.1 11.6 2.8 12.1 1.5 11.2" fill="none" stroke="#98d898" stroke-width="1.3" stroke-linecap="round"/><path d="M3.7 4.4L8.6 4.9" stroke="#98d898" stroke-width="1.2" stroke-linecap="round"/></svg><div class="t" style="left:666.9px;top:888.5px;font-size:11.2px;color:#dedede;font-weight:bold;font-style:normal;text-shadow:0 1px 1px rgba(0,0,0,.5);letter-spacing:-0.2px">Is Empty</div><svg class="abs" style="left:651.4px;top:913.2px;overflow:visible" width="16" height="12"><circle cx="6" cy="6" r="5.1" fill="#fb00d6"/><path d="M10.6 3.6L14.2 6L10.6 8.4Z" fill="#fb00d6"/></svg><div class="t" style="left:668.6px;top:915.0px;font-size:10.4px;color:#e8e8e8;font-weight:normal;font-style:normal;text-shadow:0 1px 1px rgba(0,0,0,.6);-webkit-text-stroke:0.25px rgba(240,240,240,.55)">In String</div><svg class="abs" style="left:800.9px;top:913.2px;overflow:visible" width="16" height="12"><circle cx="6" cy="6" r="5.1" fill="#930000"/><path d="M10.6 3.6L14.2 6L10.6 8.4Z" fill="#930000"/></svg><div class="t" style="right:773.6px;top:915.0px;font-size:10.4px;color:#e8e8e8;font-weight:normal;font-style:normal;text-shadow:0 1px 1px rgba(0,0,0,.6);-webkit-text-stroke:0.25px rgba(240,240,240,.55)">Return Value</div><svg class="abs" style="left:651.9px;top:957.6px" width="11" height="13"><path d="M9.4 1.4C8.2 0.6 6.9 1.2 6.5 2.8L4.6 10C4.1 11.6 2.8 12.1 1.5 11.2" fill="none" stroke="#98d898" stroke-width="1.3" stroke-linecap="round"/><path d="M3.7 4.4L8.6 4.9" stroke="#98d898" stroke-width="1.2" stroke-linecap="round"/></svg><div class="t" style="left:666.9px;top:958.0px;font-size:11.2px;color:#dedede;font-weight:bold;font-style:normal;text-shadow:0 1px 1px rgba(0,0,0,.5);letter-spacing:-0.2px">Is Numeric</div><svg class="abs" style="left:651.4px;top:983.0px;overflow:visible" width="16" height="12"><circle cx="6" cy="6" r="5.1" fill="#fb00d6"/><path d="M10.6 3.6L14.2 6L10.6 8.4Z" fill="#fb00d6"/></svg><div class="t" style="left:668.6px;top:984.8px;font-size:10.4px;color:#e8e8e8;font-weight:normal;font-style:normal;text-shadow:0 1px 1px rgba(0,0,0,.6);-webkit-text-stroke:0.25px rgba(240,240,240,.55)">Source String</div><svg class="abs" style="left:824.0px;top:983.0px;overflow:visible" width="16" height="12"><circle cx="6" cy="6" r="5.1" fill="#930000"/><path d="M10.6 3.6L14.2 6L10.6 8.4Z" fill="#930000"/></svg><div class="t" style="right:750.5px;top:984.8px;font-size:10.4px;color:#e8e8e8;font-weight:normal;font-style:normal;text-shadow:0 1px 1px rgba(0,0,0,.6);-webkit-text-stroke:0.25px rgba(240,240,240,.55)">Return Value</div><svg class="abs" style="left:874.8px;top:934.1px;overflow:visible" width="16" height="12"><circle cx="6" cy="6" r="5.1" fill="#930000"/><path d="M10.6 3.6L14.2 6L10.6 8.4Z" fill="#930000"/></svg><svg class="abs" style="left:874.8px;top:957.2px;overflow:visible" width="16" height="12"><circle cx="6" cy="6" r="5.1" fill="#930000"/><path d="M10.6 3.6L14.2 6L10.6 8.4Z" fill="#930000"/></svg><svg class="abs" style="left:966.9px;top:932.0px;overflow:visible" width="16" height="12"><circle cx="6" cy="6" r="5.1" fill="#930000"/><path d="M10.6 3.6L14.2 6L10.6 8.4Z" fill="#930000"/></svg><div class="t" style="left:928.8px;top:941.3px;font-size:20.5px;color:#9a9a9a;font-weight:bold;font-style:normal;transform:translateX(-50%);transform:translateX(-50%) scaleX(0.84)">OR</div><div class="t" style="left:926.2px;top:962.5px;font-size:11.2px;color:#e8e8e8;font-weight:normal;font-style:normal;text-shadow:0 1px 1px rgba(0,0,0,.6);-webkit-text-stroke:0.25px rgba(240,240,240,.55)">Add pin</div><svg class="abs" style="left:971px;top:962.2px" width="13" height="13"><circle cx="6.5" cy="6.5" r="5.6" fill="none" stroke="#eee" stroke-width="1.3"/><path d="M6.5 3.5V9.5M3.5 6.5H9.5" stroke="#eee" stroke-width="1.6"/></svg><div class="t" style="left:1382px;top:1004.8px;font-size:57px;font-weight:bold;color:rgba(255,255,255,.2);transform:scaleX(0.768);transform-origin:0 0;letter-spacing:0px">WIDGET</div><div class="abs" style="left:0.0px;top:0.0px;width:1571.0px;height:37.0px;background:rgba(8,8,8,.72)"></div><div class="abs" style="left:0.0px;top:0.0px;width:1571.0px;height:4.0px;background:#171717"></div><div class="abs" style="left:287.0px;top:0.0px;width:136.0px;height:3.0px;background:#242424"></div><div class="abs" style="left:45.0px;top:6.0px;width:2.0px;height:29.0px;background:#222"></div><div class="abs" style="left:114.0px;top:6.0px;width:2.0px;height:29.0px;background:#222"></div><svg class="abs" style="left:0;top:0" width="160" height="37"><path d="M11 13H18V24L14.5 21.5L11 24Z" fill="#6a6a6a"/><path d="M14.5 16H21V27.3L17.75 24.5L14.5 27.3Z" fill="#c9c9c9"/><path d="M28.5 18.3L32.3 22.2L36 18.3" stroke="#bdbdbd" stroke-width="1.3" fill="none"/><path d="M54.5 19.7L61.5 13.2V17.2H71V22.2H61.5V26.2Z" fill="#f4f4f4"/><path d="M104.4 19.7L97.4 13.2V17.2H88V22.2H97.4V26.2Z" fill="#8a8a8a"/><rect x="125.8" y="12" width="8" height="7.3" rx="1.5" fill="#cfcfcf"/><rect x="139" y="14" width="5.6" height="4.4" rx="1" fill="#cfcfcf"/><rect x="126.8" y="24.4" width="5.4" height="4.3" rx="1" fill="#cfcfcf"/><rect x="138" y="23.6" width="5.6" height="4.2" rx="1" fill="#cfcfcf"/><path d="M133.8 16H139M129.5 19.3V24.4M132.8 18.8L138.6 24.2" stroke="#bdbdbd" stroke-width="1" fill="none"/></svg><div class="t" style="left:158.0px;top:12.4px;font-size:16px;color:#ababab;font-weight:normal;font-style:normal;">BP_HostLoadGameServer</div><svg class="abs" style="left:352px;top:15px" width="12" height="13"><path d="M2.5 1.5L8.5 6.5L2.5 11.5" stroke="#d6d6d6" stroke-width="1.9" fill="none"/></svg><div class="t" style="left:370.4px;top:12.4px;font-size:16px;color:#ababab;font-weight:normal;font-style:normal;letter-spacing:-0.27px">Event Graph</div><div class="abs" style="left:0.0px;top:0.0px;width:4.0px;height:1079.0px;background:#181818"></div><div class="abs" style="left:0.0px;top:1075.0px;width:1571.0px;height:4.0px;background:#181818"></div></body></html>
